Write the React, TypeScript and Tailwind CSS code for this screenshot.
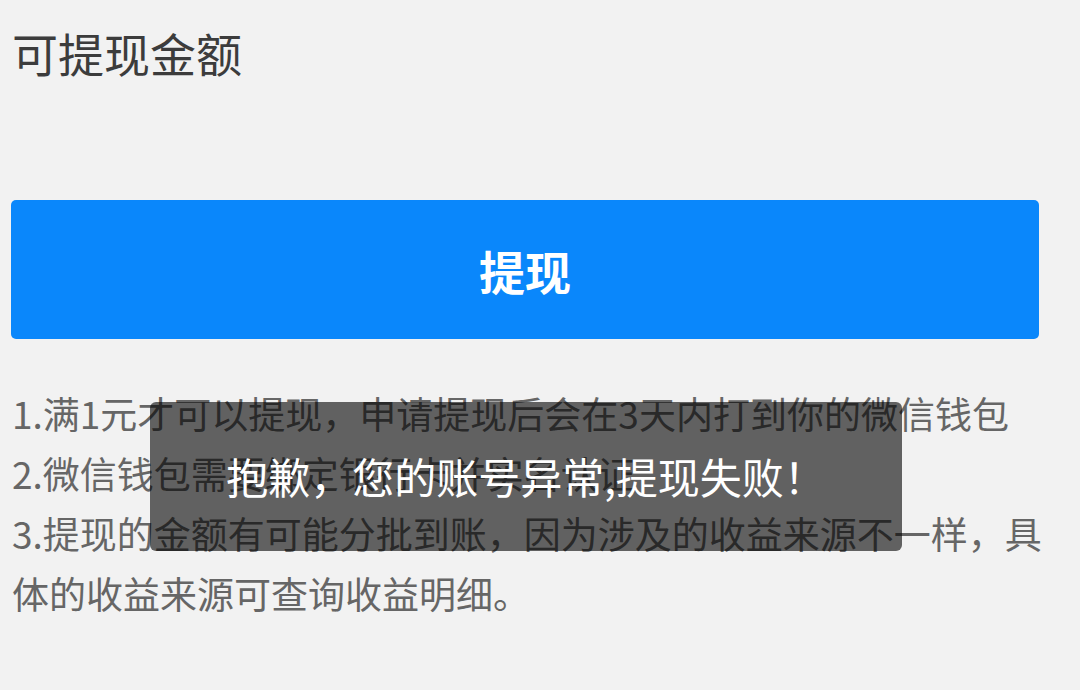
const cjk = { fontFamily: '"Noto Sans CJK SC", "Noto Sans", sans-serif' };

const rules = [
  '1.满1元才可以提现，申请提现后会在3天内打到你的微信钱包',
  '2.微信钱包需要绑定银行卡并实名认证',
  '3.提现的金额有可能分批到账，因为涉及的收益来源不一样，具体的收益来源可查询收益明细。',
];

export default function App() {
  return (
    <div className="relative h-[690px] w-[1080px] overflow-hidden bg-[#f2f2f2]" style={cjk}>
      <div className="pl-[12px] pt-[29px] text-[46px] leading-none text-[#3c3c3c]">可提现金额</div>

      <div className="ml-[11px] mt-[125px] flex h-[139px] w-[1028px] items-center justify-center rounded-[5px] bg-[#0a87fb]">
        <span className="text-[46px] font-bold leading-none text-white">提现</span>
      </div>

      <div className="mt-[44px] w-[1072px] pl-[12px] text-[37px] leading-[60px] text-[#666666]">
        {rules.map((r) => (
          <p key={r}>{r}</p>
        ))}
      </div>

      {/* toast */}
      <div className="absolute left-[150px] top-[402px] flex h-[149px] w-[752px] items-center justify-center rounded-[6px] bg-black/60">
        <span className="pb-[2px] text-[42px] leading-none text-white">抱歉，您的账号异常,提现失败！</span>
      </div>
    </div>
  );
}
